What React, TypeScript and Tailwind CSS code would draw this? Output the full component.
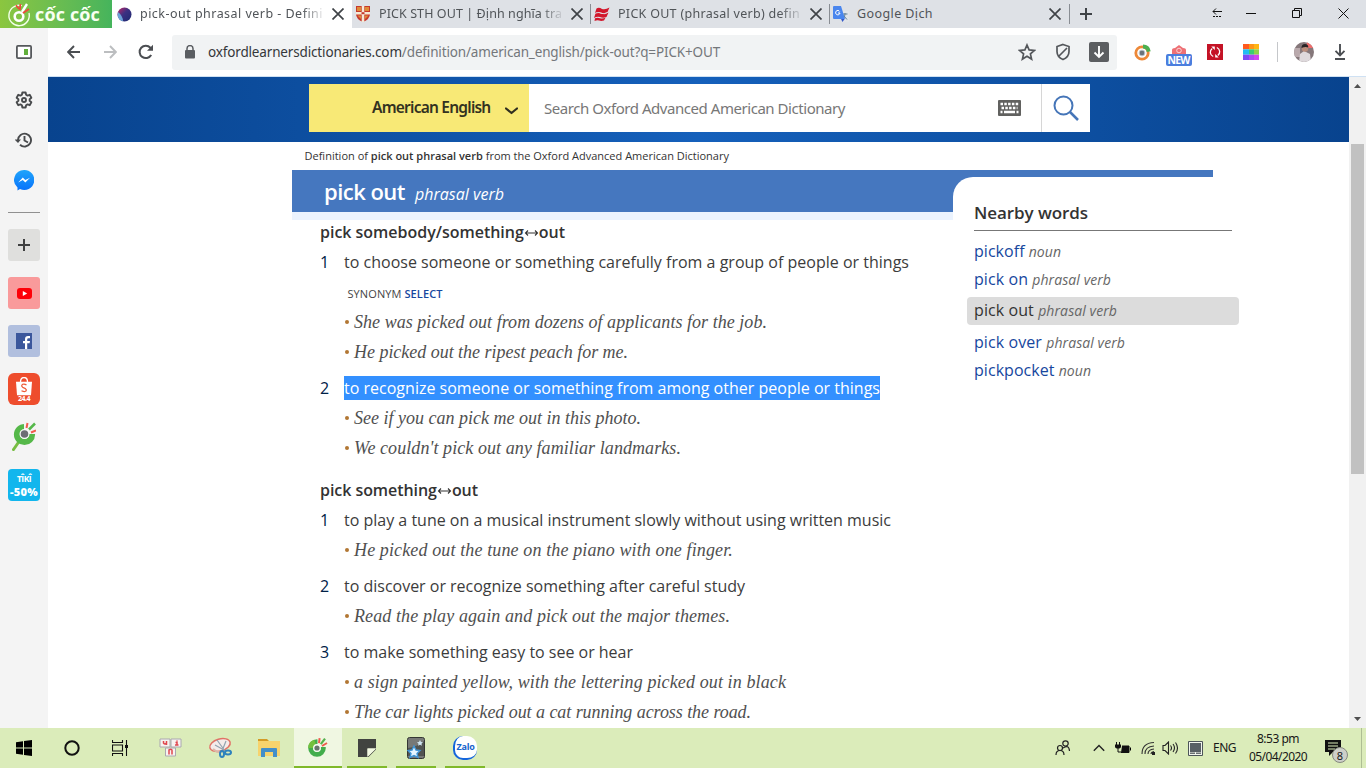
import { useLayoutEffect, useRef, useState, type ReactNode } from "react";

/** Single line of text whose letter spacing is tuned so it spans `w` pixels. */
function Fit({ w, className = "", children }: { w: number; className?: string; children: ReactNode }) {
  const ref = useRef<HTMLSpanElement>(null);
  const [spacing, setSpacing] = useState(0);
  useLayoutEffect(() => {
    const el = ref.current;
    if (!el) return;
    const count = (el.textContent ?? "").length || 1;
    setSpacing((w - el.getBoundingClientRect().width) / count);
  }, [w]);
  return (
    <span ref={ref} className={"inline-block shrink-0 whitespace-pre " + className} style={{ letterSpacing: spacing }}>
      {children}
    </span>
  );
}

function Cross() {
  return (
    <svg width="12" height="12" viewBox="0 0 12 12" className="shrink-0">
      <path d="M.5.5l11 11M11.5.5l-11 11" stroke="#3f4347" strokeWidth="1.7" />
    </svg>
  );
}

function CocCoc({ size = 18 }: { size?: number }) {
  return (
    <svg width={size} height={size} viewBox="0 0 20 20" className="shrink-0">
      <circle cx="9" cy="11" r="6.3" fill="none" stroke="#43ad4c" strokeWidth="5" />
      <path d="M2.7 11A6.3 6.3 0 0 1 7 5" fill="none" stroke="#74bf3d" strokeWidth="5" />
      <path d="M9.5 10V0h11v10z" fill="#f0f7e2" />
      <circle cx="9" cy="11" r="3.9" fill="#f6faf0" />
      <circle cx="9" cy="11" r="2.6" fill="#69736c" />
      <path d="M11 6.2l.6-5" stroke="#ef5a4c" strokeWidth="2" />
      <path d="M12.8 7.2l4.2-5.6" stroke="#54b14d" strokeWidth="2.2" />
      <path d="M14 9l5-3" stroke="#ef5a4c" strokeWidth="2" />
    </svg>
  );
}

function TabBar() {
  return (
    <div className="flex h-7 shrink-0 bg-[#dee1e6] text-[12.500px] text-[#505458]">
      <div className="flex w-28 items-center bg-gradient-to-r from-[#8bc63f] to-[#45b45c] pl-[7px]">
        <svg width="25" height="25" viewBox="0 0 25 25" className="shrink-0">
          <path d="M15 3.7A10.2 10.2 0 1 0 22 11" fill="none" stroke="#f3ffe9" strokeWidth="1.4" />
          <circle cx="12" cy="14.5" r="4.3" fill="none" stroke="#fff" strokeWidth="2.6" />
          <path d="M13 8l.3-6M12 7l-3-3.7" stroke="#ef493b" strokeWidth="1.8" />
          <path d="M15 10l5-8" stroke="#fff" strokeWidth="2.4" />
          <path d="M16 11l6-4" stroke="#ef493b" strokeWidth="1.7" />
        </svg>
        <Fit w={65} className="ml-[3px] font-['Open_Sans'] text-[18px] font-bold leading-7 text-[#f8fff2]">cốc cốc</Fit>
      </div>
      <div className="flex w-60 items-center bg-white pl-[5px]">
        <svg width="15" height="15" viewBox="0 0 15 15" className="shrink-0">
          <defs>
            <linearGradient id="ox" x1="0" x2="1" y1="0" y2="1">
              <stop offset="0" stopColor="#c72463" />
              <stop offset=".45" stopColor="#3c3182" />
              <stop offset="1" stopColor="#1c2a70" />
            </linearGradient>
          </defs>
          <circle cx="7.5" cy="7.5" r="7" fill="url(#ox)" />
          <path d="M1 5q5 4 5 9.3Q1 13 .6 8z" fill="#6ca3d8" />
        </svg>
        <div className="ml-2 w-[186px] overflow-hidden [mask-image:linear-gradient(to_right,black_87%,transparent)]">
          <Fit w={183}>pick-out phrasal verb - Defini</Fit>
        </div>
        <div className="ml-[6px]"><Cross /></div>
      </div>
      <div className="flex w-[239px] items-center pl-[4px]">
        <svg width="14" height="16" viewBox="0 0 14 16" className="shrink-0">
          <path d="M0 0h14v8q0 5-7 8Q0 13 0 8z" fill="#c7392d" />
          <path d="M1 1h4v4H1zM9 1h4v4H9zM1.500 9.500h3.500v3.500zM9 9.500h3.500L9 13z" fill="#e08b36" />
          <path d="M7 0v16M0 7.200h14" stroke="#f5e9d5" strokeWidth="2.600" />
          <path d="M5.500 7.200h3" stroke="#c7392d" strokeWidth="2" />
        </svg>
        <div className="ml-[9px] w-[186px] overflow-hidden [mask-image:linear-gradient(to_right,black_87%,transparent)]">
          <Fit w={183}>PICK STH OUT | Định nghĩa tra</Fit>
        </div>
        <div className="ml-[6px]"><Cross /></div>
      </div>
      <div className="flex w-[239px] items-center">
        <div className="-ml-px h-5 w-px bg-[#898d93]" />
        <svg width="16" height="14" viewBox="0 0 16 14" className="ml-[3px] shrink-0">
          <path d="M2.500 1.500Q5 0 8 2q3.500 1 7.500-1.500L13.500 5Q10 7 7 5.500 4 4.500 1 6zM1.500 6.500Q4 5 7 6.700q3.500 1 7.500-1.200L12.500 10q-3.500 1.500-6.500 0-3-1-6 1zM1 11.300q2.500-1 5 0 3 .6 5.500-.5L10 13.500q-3 .8-5 0-2-.5-4.500.5z" fill="#d2172c" />
          <path d="M1.500 6.300Q5 4.800 7.500 6.300T14 5.300" fill="none" stroke="#dee1e6" strokeWidth=".5" />
        </svg>
        <div className="ml-[8px] w-[186px] overflow-hidden [mask-image:linear-gradient(to_right,black_87%,transparent)]">
          <Fit w={182}>PICK OUT (phrasal verb) defin</Fit>
        </div>
        <div className="ml-[6px]"><Cross /></div>
      </div>
      <div className="flex w-60 items-center">
        <div className="-ml-px h-5 w-px bg-[#898d93]" />
        <svg width="16" height="16" viewBox="0 0 16 16" className="ml-[3px] shrink-0">
          <path d="M7 5h8q1 0 1 1v9q0 1-1 1H9z" fill="#e1e4e8" />
          <path d="M9.500 8h5M12 7v1q0 3-2 5M10.500 9.500l3.500 4" fill="none" stroke="#5f7e95" />
          <path d="M1 0h7l4 13H1q-1 0-1-1V1q0-1 1-1z" fill="#4a86ee" />
          <path d="M8 13h3.600L9.500 16z" fill="#3457c8" />
          <path d="M6.700 5.500A2.200 2.200 0 1 0 7 7H5" fill="none" stroke="#fff" />
        </svg>
        <Fit w={76} className="ml-[8px]">Google Dịch</Fit>
        <div className="ml-auto mr-[9px]"><Cross /></div>
      </div>
      <div className="flex flex-1 items-center">
        <div className="-ml-px h-5 w-px bg-[#898d93]" />
        <svg width="12" height="12" viewBox="0 0 12 12" className="ml-[10px]">
          <path d="M6 0v12M0 6h12" stroke="#3f4347" strokeWidth="2" />
        </svg>
        <svg width="150" height="28" viewBox="0 0 150 28" className="ml-auto mr-[11px]" fill="none" stroke="#111" strokeWidth="1">
          <path d="M8 11.500h9M11 8.500l-3 3 3 3M7 16.500h10" />
          <path d="M7 16.500h10" stroke="#dee1e6" strokeDasharray="1 2" />
          <path d="M41 13.500h10M87.500 10.500h7v7h-7zM89.500 10.500v-2h7v7h-2M133.500 8.500l10 10M143.500 8.500l-10 10" />
        </svg>
      </div>
    </div>
  );
}

function Cell({ children, className = "w-9" }: { children: ReactNode; className?: string }) {
  return <div className={"flex shrink-0 items-center justify-center " + className}>{children}</div>;
}

function Toolbar() {
  return (
    <div className="flex h-12 shrink-0 items-center overflow-hidden bg-white pl-2">
      <Cell>
        <svg width="14" height="14" viewBox="0 0 14 14" fill="none" stroke="#4b4e52" strokeWidth="1.900"><path d="M13 7H1.500M7 1L1.200 7 7 13" /></svg>
      </Cell>
      <Cell>
        <svg width="14" height="14" viewBox="0 0 14 14" fill="none" stroke="#bcbec0" strokeWidth="1.900"><path d="M1 7h11.500M7 1l5.800 6L7 13" /></svg>
      </Cell>
      <Cell>
        <svg width="16" height="16" viewBox="0 0 16 16"><path d="M13.200 11A6.200 6.200 0 1 1 12.400 3.700L14 5.300" fill="none" stroke="#4b4e52" strokeWidth="2" /><path d="M15 .8v6H9z" fill="#4b4e52" /></svg>
      </Cell>
      <div className="ml-2 flex h-[35px] w-[945px] shrink-0 items-center rounded-[3px] bg-[#f1f3f4] pl-[13px]">
        <svg width="10" height="14" viewBox="0 0 10 14" className="shrink-0"><path d="M2 6V3.600a3 3 0 0 1 6 0V6" fill="none" stroke="#5a5d61" strokeWidth="1.500" /><rect y="5" width="10" height="8.500" rx="1" fill="#5a5d61" /></svg>
        <Fit w={512} className="ml-[13px] text-[13.500px] text-[#74777b]"><span className="text-[#35373a]">oxfordlearnersdictionaries.com</span>/definition/american_english/pick-out?q=PICK+OUT</Fit>
        <div className="ml-auto flex">
          <Cell>
            <svg width="18" height="18" viewBox="0 0 18 18"><path d="M9 2l2.100 4.900 5.300.5-4 3.500 1.200 5.200L9 13.300l-4.600 2.800 1.200-5.200-4-3.500 5.300-.5z" fill="none" stroke="#54575b" strokeWidth="1.700" /></svg>
          </Cell>
          <Cell>
            <svg width="16" height="18" viewBox="0 0 16 18" fill="none" stroke="#54575b" strokeWidth="1.700"><path d="M8 1.500l6 2v5q0 5.500-6 8-6-2.500-6-8v-5zM4 13L12 5" /></svg>
          </Cell>
          <Cell>
            <svg width="20" height="20" viewBox="0 0 20 20"><rect width="20" height="20" rx="2" fill="#5c5e61" /><path d="M10 4v11M5.500 10.500L10 15l4.500-4.500" fill="none" stroke="#fff" strokeWidth="1.900" /></svg>
          </Cell>
        </div>
      </div>
      <Cell className="ml-[7px] w-9">
        <svg width="17" height="17" viewBox="0 0 17 17" fill="none"><circle cx="8" cy="9" r="6.200" stroke="#ed8838" strokeWidth="2.800" /><path d="M9 2.600q5 0 5.700 5" stroke="#4caf50" strokeWidth="4" /><circle cx="8" cy="9" r="2.900" fill="#6a737b" stroke="#c2ccd3" /></svg>
      </Cell>
      <Cell className="w-[37px]">
        <div className="flex flex-col items-center pt-1.5">
          <svg width="16" height="9" viewBox="0 0 16 9"><path d="M1 9V5q0-2 3-2l4-3 4 3q3 0 3 2v4z" fill="#ee7075" /><circle cx="8" cy="5.500" r="2.300" fill="none" stroke="#fbd3d3" /></svg>
          <div className="flex h-3 w-[26px] items-center justify-center rounded-[2px] bg-[#4b7ede] font-['Open_Sans'] text-[10.500px] font-bold leading-3 text-white"><Fit w={22}>NEW</Fit></div>
        </div>
      </Cell>
      <Cell>
        <svg width="16" height="16" viewBox="0 0 16 16"><rect width="16" height="16" fill="#c41326" /><path d="M6.200 12.500A4.700 4.700 0 0 1 5.200 4.400M9.800 3.500a4.700 4.700 0 0 1 1 8.100" fill="none" stroke="#fff" strokeWidth="1.300" /><path d="M4.300 2.500h3.500v3.500zM11.700 13.500H8.200V10z" fill="#fff" /></svg>
      </Cell>
      <Cell>
        <svg width="16" height="16" viewBox="0 0 16 16"><path d="M0 0h6v5.300H0z" fill="#ff5a1f" /><path d="M6 0h5v5.300H6z" fill="#ff9417" /><path d="M11 0h5v5.300h-5z" fill="#ffb514" /><path d="M0 5.300h6v5.400H0z" fill="#21bdf2" /><path d="M6 5.300h5v5.400H6z" fill="#38cf74" /><path d="M11 5.300h5v5.400h-5z" fill="#8ed44a" /><path d="M0 10.700h6V16H0z" fill="#7a4bf5" /><path d="M6 10.700h5V16H6z" fill="#ac49f4" /><path d="M11 10.700h5V16h-5z" fill="#d248ef" /></svg>
      </Cell>
      <div className="ml-2 h-5 w-px shrink-0 bg-[#c5c7ca]" />
      <Cell className="ml-2 w-9">
        <svg width="20" height="20" viewBox="0 0 20 20"><defs><clipPath id="av"><circle cx="10" cy="10" r="10" /></clipPath></defs><g clipPath="url(#av)"><path d="M0 0h20v20H0z" fill="#85777a" /><path d="M0 6h6v9H0z" fill="#b9a9ac" /><path d="M13 0h7v6h-8z" fill="#ef6d6c" /><path d="M5 20l1-8 4-3 6 3 1 8z" fill="#ded9dc" /><circle cx="11" cy="6.500" r="3.200" fill="#b98d7c" /><path d="M7.500 6q0-4 3.500-4t3.300 3.500q-3-1-6.800.5z" fill="#292426" /></g></svg>
      </Cell>
      <Cell className="w-9">
        <svg width="12" height="16" viewBox="0 0 12 16" fill="none" stroke="#4b4e52" strokeWidth="1.900"><path d="M6 0v11M1.500 6.800L6 11.300l4.500-4.500M1 15h10" /></svg>
      </Cell>
    </div>
  );
}

function Sidebar() {
  return (
    <div className="flex w-12 shrink-0 flex-col items-center bg-[#f4f4f4]">
      <svg width="16" height="14" viewBox="0 0 16 14" className="mt-[17px]"><rect x=".9" y=".9" width="14.200" height="12.200" rx="1" fill="#fff" stroke="#55585b" strokeWidth="1.800" /><path d="M8 4h4v6H8z" fill="#62af3c" /></svg>
      <svg width="18" height="20" viewBox="0 0 24 25" className="mt-[31px]" fill="none" stroke="#484a4c" strokeWidth="2.500" strokeLinejoin="round"><path d="M9.800 2.500h4.400l.6 3 1.900 1.100 2.900-1 2.200 3.800-2.300 2v2.200l2.300 2-2.200 3.800-2.900-1-1.900 1.100-.6 3H9.800l-.6-3-1.900-1.100-2.900 1-2.200-3.800 2.300-2v-2.200l-2.300-2 2.200-3.800 2.900 1 1.900-1.100z" /><circle cx="12" cy="12.500" r="2.700" /></svg>
      <svg width="18" height="16" viewBox="0 0 18 16" className="mt-[22px]" fill="none" stroke="#484a4c" strokeWidth="1.900"><path d="M3 8A6.500 6.500 0 1 1 5 12.800M9.500 4v4.500l3.500 2" /><path d="M-.5 7.500h6.500L3 11z" fill="#484a4c" stroke="none" /></svg>
      <svg width="20" height="21" viewBox="0 0 20 21" className="mt-[22px]"><defs><linearGradient id="ms" x2="0" y2="1"><stop stopColor="#20a5fb" /><stop offset="1" stopColor="#0872fb" /></linearGradient></defs><path d="M10 0a10 10 0 1 1-4 19L3.500 20.500V17.500A10 10 0 0 1 10 0z" fill="url(#ms)" /><path d="M4.200 12.500L8.800 7.600l2.500 2.500L16 7.700l-4.700 4.900-2.500-2.500z" fill="#fff" /></svg>
      <div className="mt-[21px] h-px w-8 bg-[#909090]" />
      <div className="mt-4 flex size-8 items-center justify-center rounded-[3px] bg-[#dfdfdd]"><svg width="12" height="12" viewBox="0 0 12 12"><path d="M6 0v12M0 6h12" stroke="#3f4040" strokeWidth="2" /></svg></div>
      <div className="mt-4 flex size-8 items-center justify-center rounded-[3px] bg-[#f99a9b]"><svg width="15" height="11" viewBox="0 0 15 11"><rect width="15" height="11" rx="3" fill="#fd0008" /><path d="M5.800 3v5l4.400-2.500z" fill="#fff" /></svg></div>
      <div className="mt-4 flex size-8 items-center justify-center rounded-[3px] bg-[#b1bfde]"><svg width="16" height="16" viewBox="0 0 16 16"><path d="M0 0h16v16H0z" fill="#3b579c" /><path d="M9 16v-5.700H7V8h2V6.300Q9 3 12 3h2v2.300h-1.500q-1.300 0-1.300 1.200V8H14l-.4 2.300h-2.400V16z" fill="#fff" /></svg></div>
      <div className="mt-4 flex h-8 w-8 flex-col items-center rounded-md bg-[#ee4d2d] pt-1 font-['Open_Sans']">
        <svg width="16" height="19" viewBox="0 0 16 19" className="shrink-0"><path d="M4.500 5q0-4.500 3.500-4.500T11.500 5" fill="none" stroke="#fff" strokeWidth="1.300" /><path d="M0 4.700h16l-1 13.600H1z" fill="#fff" /><path d="M10.500 8q-2-1.500-3.800-.7-2 1.400 0 3 3.200.8 3.700 2.500-.4 3-4.900.9" fill="none" stroke="#ed5a36" strokeWidth="1.200" /></svg>
        <Fit w={12} className="-mt-[2px] text-[7px] font-bold leading-[10px] text-white">24.4</Fit>
      </div>
      <svg width="24" height="29" viewBox="0 0 24 29" className="mt-[17px]"><path d="M6 21L1.500 27.500" stroke="#78bd43" strokeWidth="3" strokeLinecap="round" /><circle cx="12.500" cy="12.500" r="7.600" fill="none" stroke="#55b849" strokeWidth="6" /><path d="M12 12V0h12v12z" fill="#f4f4f4" /><circle cx="12.500" cy="12" r="5" fill="#f8faf8" /><circle cx="12.500" cy="12" r="3.800" fill="#6c6d74" /><path d="M14.500 6l1-5M19 10.500l5-2" stroke="#f15b4d" strokeWidth="2" /><path d="M17 7.500L23 1.500" stroke="#55b849" strokeWidth="2.500" /></svg>
      <div className="mt-[18px] flex h-8 w-8 flex-col items-center rounded-[4px] bg-[#12b6ed] pt-[3px] font-['Open_Sans'] font-bold text-white">
        <Fit w={14} className="text-[8.500px] leading-[13px]">TÎKÎ</Fit>
        <Fit w={28} className="text-[11px] font-extrabold leading-[13px]">-50%</Fit>
      </div>
    </div>
  );
}

function SiteHeader() {
  return (
    <div className="flex h-[65px] shrink-0 bg-gradient-to-r from-[#08438e] via-[#1560bb] to-[#08438e] pl-[261px] pt-[7px] font-['Noto_Sans']">
      <div className="flex h-12 w-[781px] bg-white text-[15px]">
        <div className="flex w-[220px] items-center bg-[#f8e976] pl-[63px] text-[#33321f]">
          <Fit w={118.500} className="text-[15.500px] font-semibold">American English</Fit>
          <svg width="13" height="8" viewBox="0 0 13 8" className="ml-[14px] mt-[5px] shrink-0"><path d="M1 1.500l5.500 4.500L12 1.500" fill="none" stroke="#302f20" strokeWidth="2.200" strokeLinecap="round" strokeLinejoin="round" /></svg>
        </div>
        <div className="flex flex-1 items-center pl-[15px] text-[#777]">
          <Fit w={301}>Search Oxford Advanced American Dictionary</Fit>
          <svg width="23" height="16" viewBox="0 0 23 16" className="ml-auto mr-5"><rect width="23" height="16" rx="1" fill="#61615f" /><g stroke="#fff" strokeWidth="2.300"><path d="M2.500 4h18.500" strokeDasharray="2.500 1.300" /><path d="M3.500 8h16" strokeDasharray="2.500 1.300" /><path d="M2.500 12h2M6 12h11M18.500 12h2" /></g></svg>
        </div>
        <div className="flex w-[49px] items-center justify-center border-l border-[#d6d6d6]">
          <svg width="26" height="26" viewBox="0 0 26 26" fill="none" stroke="#4575b8"><circle cx="10.500" cy="10.500" r="9" strokeWidth="2" /><path d="M17 17l8 8" strokeWidth="2.500" /></svg>
        </div>
      </div>
    </div>
  );
}

function Heading({ w, left, className = "" }: { w: number; left: string; className?: string }) {
  return (
    <div className={"flex h-[30px] items-center pl-7 font-semibold text-[#333] " + className}>
      <Fit w={w}>
        {left}
        <svg width="15" height="8" viewBox="0 0 15 8" className="mb-px inline-block"><path d="M2 4h11M4 1.500L1.500 4 4 6.500M11 1.500L13.500 4 11 6.500" fill="none" stroke="#333" strokeWidth="1.100" /></svg>
        out
      </Fit>
    </div>
  );
}

function Sense({ n, w, text, selected = false }: { n: string; w: number; text: string; selected?: boolean }) {
  return (
    <div className="flex h-[30px] items-center pl-7">
      <span className="w-6 shrink-0 text-[#002147]">{n}</span>
      <Fit w={w} className={selected ? "bg-[#3390ff] leading-6 text-white" : "text-[#3c3c3c]"}>{text}</Fit>
    </div>
  );
}

function Example({ w, text }: { w: number; text: string }) {
  return (
    <div className="flex h-[30px] items-center pl-[53px] font-['Liberation_Serif'] text-[18px] italic text-[#505050]">
      <span className="mr-[5px] size-1 shrink-0 rounded-full bg-[#b27733]" />
      <Fit w={w}>{text}</Fit>
    </div>
  );
}

function Nearby({ word, kind, w, current = false }: { word: string; kind: string; w: number; current?: boolean }) {
  return (
    <div className={current ? "mb-[3px] mt-1 flex h-7 items-center rounded bg-[#dcdcdc] pb-0.5 pl-[7px]" : "flex h-7 items-center pl-[7px]"}>
      <Fit w={w} className={current ? "text-[#333]" : "text-[#17479e]"}>
        {word} <span className="text-sm italic text-[#666]">{kind}</span>
      </Fit>
    </div>
  );
}

function Entry() {
  return (
    <div className="flex flex-col pl-[244px] font-['Open_Sans'] text-base">
      <div className="flex h-7 items-center pl-[12.500px] text-[11px] text-[#333]">
        <Fit w={424.500}>Definition of <b className="font-semibold">pick out phrasal verb</b> from the Oxford Advanced American Dictionary</Fit>
      </div>
      <div className="flex">
        <div className="w-[661px] shrink-0">
          <div className="flex h-[50px] items-baseline border-b-8 border-[#ebf3fe] bg-[#4577bf] pl-8 leading-[42px] text-white">
            <Fit w={81} className="text-[22px] font-semibold">pick out</Fit>
            <Fit w={89} className="ml-[10px] italic">phrasal verb</Fit>
          </div>
          <div className="-mt-[3px] flex flex-col">
            <Heading w={245} left="pick somebody/something" />
            <Sense n="1" w={565} text="to choose someone or something carefully from a group of people or things" />
            <div className="flex h-[30px] items-center pl-[55.500px] pt-1 text-[11px] text-[#444]">
              <Fit w={95}>SYNONYM <span className="font-semibold text-[#17479e]">SELECT</span></Fit>
            </div>
            <Example w={413} text="She was picked out from dozens of applicants for the job." />
            <Example w={274} text="He picked out the ripest peach for me." />
            <div className="h-1.5" />
            <Sense n="2" w={536} text="to recognize someone or something from among other people or things" selected />
            <Example w={287} text="See if you can pick me out in this photo." />
            <Example w={327} text="We couldn't pick out any familiar landmarks." />
            <Heading w={158} left="pick something" className="mt-3" />
            <Sense n="1" w={547} text="to play a tune on a musical instrument slowly without using written music" />
            <Example w={379} text="He picked out the tune on the piano with one finger." />
            <div className="h-1.5" />
            <Sense n="2" w={401} text="to discover or recognize something after careful study" />
            <Example w={376} text="Read the play again and pick out the major themes." />
            <div className="h-1.5" />
            <Sense n="3" w={289} text="to make something easy to see or hear" />
            <Example w={432} text="a sign painted yellow, with the lettering picked out in black" />
            <Example w={397} text="The car lights picked out a cat running across the road." />
          </div>
        </div>
        <div className="w-[286px] shrink-0">
          <div className="h-[42px] w-[260px] bg-[#4577bf]" />
          <div className="-mt-[35px] rounded-tl-[20px] bg-white pl-[14px] pt-[19px]">
            <div className="ml-[7px] flex h-[35px] w-[258px] items-center border-b border-[#777] text-[17px] font-semibold text-[#333]">
              <Fit w={114}>Nearby words</Fit>
            </div>
            <div className="pt-1.5">
              <Nearby word="pickoff" kind="noun" w={87} />
              <Nearby word="pick on" kind="phrasal verb" w={137} />
              <Nearby word="pick out" kind="phrasal verb" w={143} current />
              <Nearby word="pick over" kind="phrasal verb" w={151} />
              <Nearby word="pickpocket" kind="noun" w={117} />
            </div>
          </div>
        </div>
      </div>
    </div>
  );
}

function ScrollBar() {
  return (
    <div className="flex w-[17px] shrink-0 flex-col items-center bg-[#f1f1f1]">
      <svg width="17" height="17" viewBox="0 0 17 17" className="shrink-0"><path d="M5 11l3.500-4 3.500 4z" fill="#505050" /></svg>
      <div className="mt-[50px] h-[330px] w-[13px] bg-[#c1c1c1]" />
      <svg width="17" height="17" viewBox="0 0 17 17" className="mt-auto"><path d="M5 6l3.500 4L12 6z" fill="#505050" /></svg>
    </div>
  );
}

function TaskApp({ children, running = false, active = false }: { children: ReactNode; running?: boolean; active?: boolean }) {
  return (
    <div className="flex w-[49px] flex-col items-center">
      <div className={active ? "flex h-[38px] w-12 items-center justify-center bg-[#f0f7e2]" : "flex h-[38px] w-12 items-center justify-center pt-0.5"}>{children}</div>
      {active && <div className="h-0.5 w-12 bg-[#80b92a]" />}
      {running && <div className="h-0.5 w-10 bg-[#80b92a]" />}
    </div>
  );
}

function TaskBar() {
  return (
    <div className="flex h-10 shrink-0 bg-[#dbecba] text-[#181818]">
      <Cell className="w-12"><svg width="16" height="16" viewBox="0 0 16 16"><path d="M0 2.200l7-1v6.300H0zM8 1l8-1v7.500H8zM0 8.500h7v6.300l-7-1zM8 8.500h8V16l-8-1z" /></svg></Cell>
      <Cell className="w-12"><svg width="16" height="16" viewBox="0 0 16 16"><circle cx="8" cy="8" r="6.700" fill="none" stroke="#111" strokeWidth="2" /></svg></Cell>
      <Cell className="w-12"><svg width="16" height="16" viewBox="0 0 16 16" fill="none" stroke="#111" strokeWidth="1.100"><path d="M.5 0v2.500h10V0M.5 16v-2.500h10V16M.5 5h10v6H.5zM14.500 0v16" /><path d="M13 5h3v3h-3z" fill="#111" stroke="none" /></svg></Cell>
      <div className="ml-0.5 flex">
        <TaskApp>
          <svg width="24" height="20" viewBox="0 0 24 20"><g fill="#f7f3f0" stroke="#aaa8b0"><path d="M1 1h10v8H1zM12 1h10v8H12zM6.500 10h10v8h-10z" /></g><path d="M4.500 3v2q1.500 2 3 0V3v4M16.500 4.500h1.500V7M16 7h3.500M18 2.500v1M10 16.500v-4.500q3-1.500 3 .5v4" fill="none" stroke="#df474e" strokeWidth="1.500" /></svg>
        </TaskApp>
        <TaskApp>
          <svg width="24" height="22" viewBox="0 0 24 22" fill="none"><ellipse cx="12" cy="8" rx="10.500" ry="6" transform="rotate(-16 12 8)" fill="#f4ecea" stroke="#e17266" strokeWidth="1.500" /><path d="M5 12q5 5 10 2" stroke="#dcb8a8" strokeWidth="2" /><path d="M9 3l8 11M18 4l-4 10M7 8l9 5" stroke="#93a3af" strokeWidth="1.200" /><ellipse cx="14" cy="17" rx="2" ry="3" stroke="#2d82bd" strokeWidth="2" /><ellipse cx="20" cy="15.500" rx="3" ry="2" stroke="#2d82bd" strokeWidth="2" /></svg>
        </TaskApp>
        <TaskApp>
          <svg width="22" height="20" viewBox="0 0 22 20"><path d="M0 3V1h9l2 2h9v5z" fill="#d49b25" /><path d="M0 3h22v15H0z" fill="#f7d36d" /><path d="M3 19v-8q0-1 1-1h14q1 0 1 1v8h-4v-5H7v5z" fill="#438fc9" /></svg>
        </TaskApp>
        <TaskApp active><CocCoc size={20} /></TaskApp>
        <TaskApp running><svg width="18" height="18" viewBox="0 0 18 18"><path d="M0 0h18v18H0z" fill="#414340" /><path d="M9.500 18v-8.500H18z" fill="#edf5d4" /><path d="M10.500 18H18v-7.500z" fill="#dbecba" /><path d="M9.500 17.500v-8H18z" fill="#f3f9e3" /></svg></TaskApp>
        <TaskApp running>
          <svg width="18" height="22" viewBox="0 0 18 22"><rect x=".5" y=".5" width="17" height="21" rx="2" fill="#777977" stroke="#343734" /><path d="M1 11Q10 10 17 4v15H1z" fill="#515451" /><path d="M7 9l2 4 4 .5-3 3 1 4-4-2-4 2 1-4-3-3 4-.5z" fill="#e6f5ff" stroke="#4094d5" strokeWidth="1.400" /><path d="M13 3l1 2 2 .3-1.500 1.400.4 2-1.900-1-1.900 1 .4-2L10 5.300l2-.3z" fill="#d0e5f2" /></svg>
        </TaskApp>
        <TaskApp running>
          <div className="flex h-6 w-6 items-center justify-center rounded-[10px] border-b-2 border-l-2 border-[#1465dc] bg-white font-['Open_Sans'] text-[9px] font-bold text-[#1763cc]"><Fit w={18}>Zalo</Fit></div>
        </TaskApp>
      </div>
      <div className="ml-auto flex items-center text-xs">
        <Cell className="w-5"><svg width="16" height="16" viewBox="0 0 16 16" fill="none" stroke="#222" strokeWidth="1.200"><circle cx="5" cy="8" r="2.500" /><path d="M1 15q0-4.500 4-4.500T9 15" /><circle cx="10.500" cy="3.500" r="2.700" /><path d="M8 8q6-4 6.500 3" /></svg></Cell>
        <Cell className="ml-[19px] w-[14px]"><svg width="12" height="8" viewBox="0 0 12 8"><path d="M.8 6.700L6 1.500l5.200 5.200" fill="none" stroke="#222" strokeWidth="1.400" /></svg></Cell>
        <Cell className="ml-[9px] w-4"><svg width="16" height="12" viewBox="0 0 16 12"><path d="M1.500 0v3M4.500 0v3" fill="none" stroke="#111" /><path d="M0 2.500h6v2q0 2-3 2t-3-2z" fill="#111" /><path d="M3 6v4h3" fill="none" stroke="#111" /><path d="M7 4h7v6.500H6" fill="#111" stroke="#111" /><path d="M15 5.500h1v3h-1z" /></svg></Cell>
        <Cell className="ml-[10px] w-[14px]"><svg width="14" height="14" viewBox="0 0 14 14" fill="none" stroke="#333" strokeWidth="1.100"><path d="M1 13Q1 2 13 1.500M4 13q0-7.500 9-8M7 13q0-4.500 6-5M10 13q0-2 3-2.500" /><path d="M11 11h3v3h-3z" fill="#222" stroke="none" /></svg></Cell>
        <Cell className="ml-[7px] w-[18px]"><svg width="18" height="14" viewBox="0 0 18 14" fill="none" stroke="#222" strokeWidth="1.100"><path d="M1 4.500h2L6.500 1v12L3 9.500H1zM8.500 4.500q2 2.500 0 5M11 3q3 4 0 8M13.500 1.500q4 5.500 0 11" /></svg></Cell>
        <Cell className="ml-[7px] w-4"><svg width="15" height="15" viewBox="0 0 15 15"><path d="M.5.500h14v14H.5z" fill="#f1f5ed" stroke="#4c5558" /><path d="M2 2h11v9H2z" fill="#586065" /><path d="M2 11.500h5V13H2zM8 11.500h5V13H8z" fill="#6a7073" /></svg></Cell>
        <Fit w={23} className="ml-[10px]">ENG</Fit>
        <div className="ml-[13px] flex w-[58px] flex-col items-center leading-[18px]">
          <Fit w={42}>8:53 pm</Fit>
          <Fit w={58}>05/04/2020</Fit>
        </div>
        <div className="relative ml-[18px] mt-2 h-6 w-6">
          <svg width="16" height="16" viewBox="0 0 16 16"><path d="M0 0h16v12H8l-4 4v-4H0z" fill="#111" /><path d="M3 3h10M3 6h10M3 9h7" stroke="#dbecba" /></svg>
          <div className="absolute left-[7px] top-[7px] flex size-4 items-center justify-center rounded-full border border-[#868a80] bg-[#cdcfc9] text-[11px] leading-none">8</div>
        </div>
        <div className="ml-3 mr-1 h-10 w-px bg-[#aebe94]" />
      </div>
    </div>
  );
}

export default function App() {
  return (
    <div className="flex h-[768px] w-[1366px] flex-col overflow-hidden bg-white font-['Noto_Sans',sans-serif]">
      <TabBar />
      <div className="flex h-[700px] shrink-0">
        <Sidebar />
        <div className="flex min-w-0 flex-1 flex-col">
          <Toolbar />
          <div className="flex h-[652px] border-t border-[#cfe1f3]">
            <div className="flex w-[1301px] shrink-0 flex-col overflow-hidden">
              <SiteHeader />
              <Entry />
            </div>
            <ScrollBar />
          </div>
        </div>
      </div>
      <TaskBar />
    </div>
  );
}
